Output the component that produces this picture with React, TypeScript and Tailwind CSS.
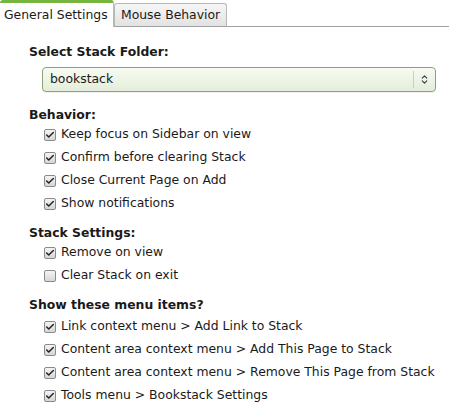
import { Check, ChevronsUpDown } from 'lucide-react';

type Item = { label: string; checked: boolean };

const behavior: Item[] = [
  { label: 'Keep focus on Sidebar on view', checked: true },
  { label: 'Confirm before clearing Stack', checked: true },
  { label: 'Close Current Page on Add', checked: true },
  { label: 'Show notifications', checked: true },
];

const stackSettings: Item[] = [
  { label: 'Remove on view', checked: true },
  { label: 'Clear Stack on exit', checked: false },
];

const menuItems: Item[] = [
  { label: 'Link context menu > Add Link to Stack', checked: true },
  { label: 'Content area context menu > Add This Page to Stack', checked: true },
  { label: 'Content area context menu > Remove This Page from Stack', checked: true },
  { label: 'Tools menu > Bookstack Settings', checked: true },
];

function CheckRow({ item }: { item: Item }) {
  return (
    <div className="flex h-[23px] items-center gap-[5px] pl-[15px]">
      <span className="flex h-[12px] w-[12px] items-center justify-center rounded-[2px] border border-[#8a8a8a] bg-gradient-to-b from-[#f4f4f4] to-[#d6d6d6]">
        {item.checked && <Check size={10} strokeWidth={3.5} className="text-[#222]" />}
      </span>
      <span className="whitespace-nowrap">{item.label}</span>
    </div>
  );
}

function Section({ title, items, head = 'h-[16px]' }: { title: string; items: Item[]; head?: string }) {
  return (
    <div className="flex flex-col">
      <div className={`${head} font-bold leading-[16px]`}>{title}</div>
      {items.map((it) => (
        <CheckRow key={it.label} item={it} />
      ))}
    </div>
  );
}

export default function App() {
  return (
    <div
      className="h-[411px] w-[449px] bg-white text-[12.4px] text-[#1a1a1a]"
      style={{ fontFamily: '"DejaVu Sans", sans-serif' }}
    >
      {/* Tabs */}
      <div className="flex h-[27px] items-end">
        <div className="h-[27px] w-[114px] whitespace-nowrap rounded-t-[3px] border-t-[3px] border-r border-[#76b53f] border-r-[#b8b8b8] bg-white pl-[4px] pt-[4px] leading-[16px]">
          General Settings
        </div>
        <div className="h-[24px] w-[113px] whitespace-nowrap rounded-t-[3px] border border-b-[#a0a0a0] border-[#b8b8b8] bg-gradient-to-b from-[#f6f6f6] to-[#e2e2e2] pl-[6px] pt-[3px] leading-[16px]">
          Mouse Behavior
        </div>
        <div className="h-[1px] flex-1 bg-[#a0a0a0]" />
      </div>

      <div className="flex flex-col pl-[29px] pr-[13px] pt-[18px]">
        <div className="h-[14px] font-bold leading-[14px]">Select Stack Folder:</div>
        <div className="ml-[13px] mt-[8px] flex h-[25px] items-center rounded-[4px] border border-[#8aa276] bg-gradient-to-b from-[#f7fbf2] to-[#e4eedb] shadow-[0_1px_0_rgba(0,0,0,0.05)]">
          <span className="flex-1 pl-[7px]">bookstack</span>
          <span className="h-[17px] w-px bg-[#c7d2bd]" />
          <span className="flex w-[21px] items-center justify-center">
            <ChevronsUpDown size={11} strokeWidth={2.2} className="text-[#333]" />
          </span>
        </div>
        <div className="mt-[15px] flex flex-col gap-[10px]">
          <Section title="Behavior:" items={behavior} />
          <Section title="Stack Settings:" items={stackSettings} />
          <Section title="Show these menu items?" items={menuItems} head="h-[18px]" />
        </div>
      </div>
    </div>
  );
}
